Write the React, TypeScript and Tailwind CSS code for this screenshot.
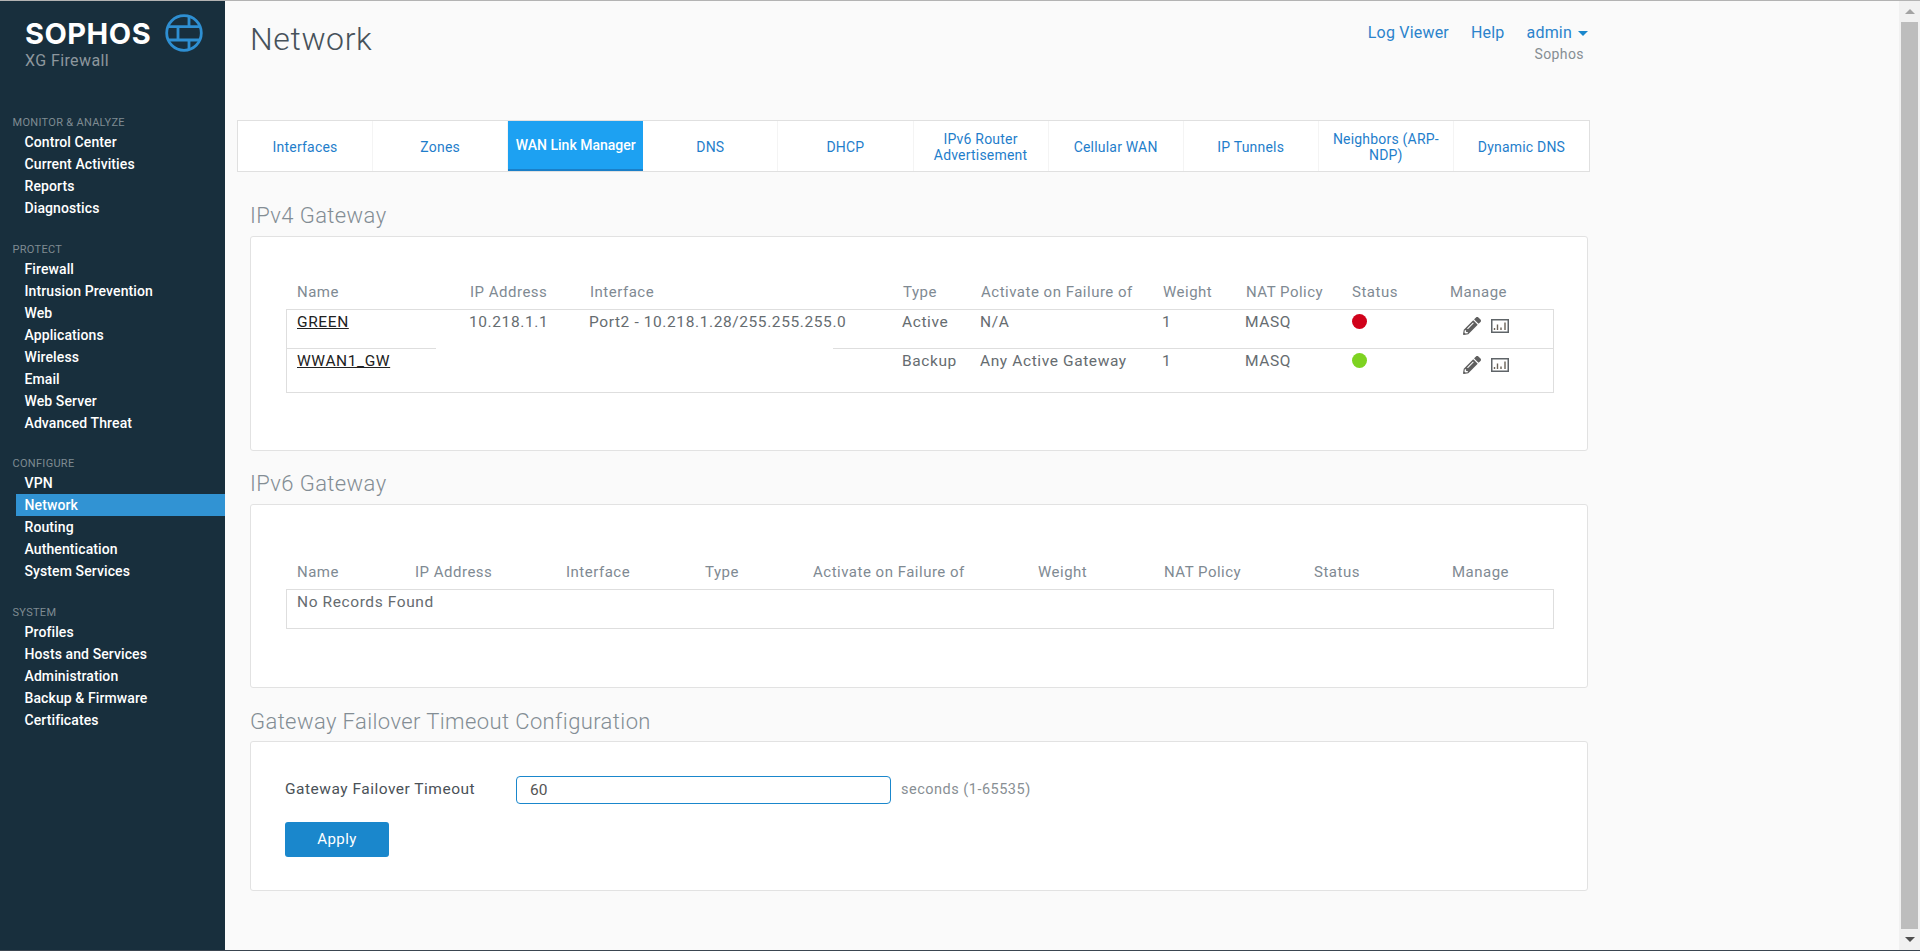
import React from "react";
import { FaPencilAlt } from "react-icons/fa";

const nav = [
  {
    label: "MONITOR & ANALYZE",
    gap: "mb-[21px]",
    items: ["Control Center", "Current Activities", "Reports", "Diagnostics"],
  },
  {
    label: "PROTECT",
    gap: "mb-[20px]",
    items: ["Firewall", "Intrusion Prevention", "Web", "Applications", "Wireless", "Email", "Web Server", "Advanced Threat"],
  },
  {
    label: "CONFIGURE",
    gap: "mb-[21px]",
    items: ["VPN", "Network", "Routing", "Authentication", "System Services"],
  },
  {
    label: "SYSTEM",
    gap: "",
    items: ["Profiles", "Hosts and Services", "Administration", "Backup & Firmware", "Certificates"],
  },
];

const tabs = [
  "Interfaces",
  "Zones",
  "WAN Link Manager",
  "DNS",
  "DHCP",
  "IPv6 Router Advertisement",
  "Cellular WAN",
  "IP Tunnels",
  "Neighbors (ARP-NDP)",
  "Dynamic DNS",
];

const ipv4Cols = "grid grid-cols-[183px_120px_313px_78px_182px_83px_106px_98px_1fr]";
const ipv6Cols = "grid grid-cols-[128px_151px_139px_108px_225px_126px_150px_138px_1fr]";

const tableHead = ["Name", "IP Address", "Interface", "Type", "Activate on Failure of", "Weight", "NAT Policy", "Status", "Manage"];

const rows = [
  { name: "GREEN", ip: "10.218.1.1", iface: "Port2 - 10.218.1.28/255.255.255.0", type: "Active", failure: "N/A", dot: "bg-[#d0021b]", h: "h-[39px]" },
  { name: "WWAN1_GW", ip: "", iface: "", type: "Backup", failure: "Any Active Gateway", dot: "bg-[#7ed321]", h: "h-[43px]" },
];

function BrickGlobe() {
  return (
    <svg width="38" height="38" viewBox="0 0 38 38" fill="none" stroke="#2e8fd2" strokeWidth="2.8">
      <circle cx="19" cy="19" r="17.3" />
      <path d="M3.5 12.7h31M3 26h32M13 12.7V26M24 26v10M24 2v10.7" />
    </svg>
  );
}

function ChartIcon() {
  return (
    <svg width="18" height="14" viewBox="0 0 18 14">
      <rect x="0.75" y="0.75" width="16.5" height="12.5" fill="#fff" stroke="#5f6468" strokeWidth="1.5" />
      <path d="M3.5 11V9M6.5 11V5.5M10 11V8.5M14 11V3.5" stroke="#6b6358" strokeWidth="1.4" />
    </svg>
  );
}

function Sidebar() {
  return (
    <aside className="w-[225px] shrink-0 bg-[#182f3d] flex flex-col">
      <div className="h-[112px] relative pl-[25px] pt-[17px]">
        <div className="text-white font-bold text-[29px] leading-[32px] tracking-[0.5px] font-['Inter',sans-serif]">SOPHOS</div>
        <div className="text-[#8d979e] text-[16px] leading-[20px] mt-[1px] tracking-[0.4px]">XG Firewall</div>
        <div className="absolute left-[165px] top-[13px]">
          <BrickGlobe />
        </div>
      </div>
      {nav.map((group) => (
        <div key={group.label} className={group.gap}>
          <div className="h-[18px] pl-[12.5px] text-[11px] leading-[20px] text-[#7f8b92] tracking-[0.3px]">{group.label}</div>
          {group.items.map((item) => (
            <div
              key={item}
              className={`h-[22px] leading-[22px] pl-[8.5px] ml-[16px] text-[14px] font-medium tracking-[0.1px] text-white ${item === "Network" ? "bg-[#3193d3]" : ""}`}
            >
              {item}
            </div>
          ))}
        </div>
      ))}
    </aside>
  );
}

function SectionTitle({ children, className }: { children: React.ReactNode; className: string }) {
  return <h2 className={`h-[30px] leading-[32px] pl-[13px] text-[22px] font-light tracking-[0.4px] text-[#838d94] ${className}`}>{children}</h2>;
}

function Card({ children, className }: { children: React.ReactNode; className: string }) {
  return <div className={`ml-[13px] mr-[2px] bg-white border border-[#e2e2e2] rounded-[3px] ${className}`}>{children}</div>;
}

export default function App() {
  return (
    <div className="h-[951px] w-[1920px] overflow-hidden flex flex-col bg-[#fafafa] font-['Roboto',sans-serif]">
      <div className="h-px shrink-0 bg-[#b3b3b3]" />
      <div className="flex-1 flex min-h-0">
        <Sidebar />
        <main className="flex-1 pl-[12px] pr-[309px] min-w-0">
          <header className="h-[119px] flex justify-between pl-[13px] pr-[2px]">
            <h1 className="text-[32px] leading-[38px] pt-[19px] text-[#47525a] font-light tracking-[0.6px]">Network</h1>
            <div className="pt-[23px] text-[16px] leading-[18px] tracking-[0.2px]">
              <div className="flex gap-[22px] text-[#2b83cc]">
                <span>Log Viewer</span>
                <span>Help</span>
                <span className="flex items-center gap-[6px]">
                  admin
                  <span className="w-0 h-0 border-x-[5px] border-x-transparent border-t-[5px] border-t-[#1a87cc]" />
                </span>
              </div>
              <div className="text-right text-[#868e93] mt-[3px] pr-[4px] text-[14px] tracking-[0.4px]">Sophos</div>
            </div>
          </header>

          <nav className="h-[52px] grid grid-cols-10 bg-white border border-[#e0e0e0]">
            {tabs.map((tab, i) => (
              <div
                key={tab}
                className={`min-w-0 flex items-center justify-center text-center text-[14px] leading-[16px] ${
                  tab === "WAN Link Manager"
                    ? "bg-[#1da1f2] text-white font-medium border-b-2 border-[#1a7fc8] pb-[1px] whitespace-nowrap"
                    : `text-[#1f7ecb] tracking-[0.2px] px-[6px] pt-[2px] ${i < tabs.length - 1 ? "border-r border-[#f4f4f4]" : ""}`
                }`}
              >
                {tab}
              </div>
            ))}
          </nav>

          <SectionTitle className="mt-[28px]">IPv4 Gateway</SectionTitle>
          <Card className="mt-[6px] h-[215px] pt-[40px] pl-[35px] pr-[33px]">
            <div className={`${ipv4Cols} h-[32px] pb-[1px] items-center border-x border-transparent text-[15px] text-[#7f8a93] tracking-[0.5px]`}>
              {tableHead.map((h, i) => (
                <div key={h} className={i === 0 ? "pl-[10px]" : ""}>{h}</div>
              ))}
            </div>
            <div className="relative border border-[#dedede]">
              {rows.map((r, i) => (
                <div key={r.name} className={`${ipv4Cols} ${r.h} pt-[3px] text-[15.5px] leading-[18px] text-[#666c70] tracking-[0.6px] ${i === 0 ? "border-b border-[#dedede]" : ""}`}>
                  <div className="pl-[10px]">
                    <span className="underline text-[#222]">{r.name}</span>
                  </div>
                  <div className="-ml-px">{r.ip}</div>
                  <div className="-ml-px">{r.iface}</div>
                  <div className="-ml-px">{r.type}</div>
                  <div className="-ml-px">{r.failure}</div>
                  <div className="-ml-px">1</div>
                  <div className="-ml-px">MASQ</div>
                  <div>
                    <div className={`w-[15px] h-[15px] mt-[1px] rounded-full ${r.dot}`} />
                  </div>
                  <div className="flex items-center h-[18px] pl-[13px] gap-[10px] mt-[4px]">
                    <FaPencilAlt className="w-[18px] h-[18px] text-[#5f5f5f]" />
                    <ChartIcon />
                  </div>
                </div>
              ))}
              <div className="absolute left-[149px] top-[38px] w-[397px] h-px bg-white" />
            </div>
          </Card>

          <SectionTitle className="mt-[17px]">IPv6 Gateway</SectionTitle>
          <Card className="mt-[6px] h-[184px] pt-[51px] pl-[35px] pr-[33px]">
            <div className={`${ipv6Cols} h-[33px] items-center border-x border-transparent text-[15px] text-[#7f8a93] tracking-[0.5px]`}>
              {tableHead.map((h, i) => (
                <div key={h} className={i === 0 ? "pl-[10px]" : ""}>{h}</div>
              ))}
            </div>
            <div className="border border-[#dedede] h-[40px] pl-[10px] pt-[3px] text-[15.5px] leading-[18px] text-[#666c70] tracking-[0.6px]">No Records Found</div>
          </Card>

          <SectionTitle className="mt-[18px]">Gateway Failover Timeout Configuration</SectionTitle>
          <Card className="mt-[5px] h-[150px] pt-[34px] px-[34px]">
            <div className="flex items-center h-[28px]">
              <label className="w-[231px] text-[15.5px] text-[#4a5157] tracking-[0.5px]">Gateway Failover Timeout</label>
              <div className="w-[375px] h-[28px] border border-[#1a87cc] rounded-[4px] bg-white pl-[13px] text-[15.5px] leading-[26px] text-[#555]">60</div>
              <span className="ml-[10px] text-[14.5px] text-[#888f94] tracking-[0.5px]">seconds (1-65535)</span>
            </div>
            <button className="mt-[18px] block w-[104px] h-[35px] bg-[#1a87cc] rounded-[3px] text-white text-[15px] tracking-[0.4px]">Apply</button>
          </Card>
        </main>

        <div className="w-[21px] shrink-0 bg-[#f1f1f1] flex flex-col items-center">
          <div className="h-[21px] flex items-center justify-center">
            <span className="w-0 h-0 border-x-[5px] border-x-transparent border-b-[5px] border-b-[#a3a3a3]" />
          </div>
          <div className="flex-1 w-[17px] bg-[#bdbdbd]" />
          <div className="h-[21px] flex items-center justify-center">
            <span className="w-0 h-0 border-x-[5px] border-x-transparent border-t-[5px] border-t-[#505050]" />
          </div>
        </div>
      </div>
      <div className="h-px shrink-0 bg-[#3a4550]" />
    </div>
  );
}
